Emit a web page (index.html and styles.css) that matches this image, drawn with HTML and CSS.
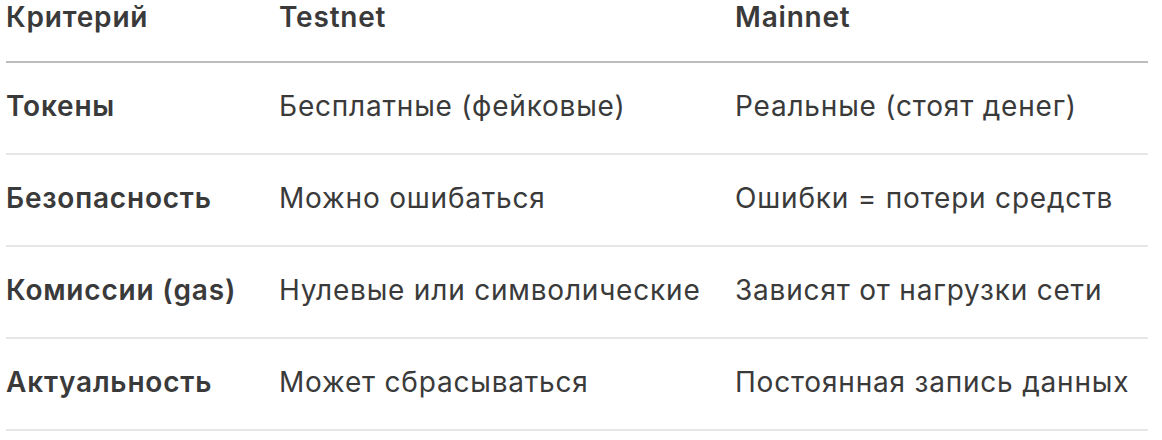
FILE: index.html
```html
<!DOCTYPE html>
<html lang="ru">
<head>
<meta charset="utf-8">
<link rel="stylesheet" href="styles.css">
</head>
<body>
<div class="wrap">
<table class="cmp">
  <colgroup>
    <col class="c1"><col class="c2"><col class="c3">
  </colgroup>
  <thead>
    <tr><th>Критерий</th><th>Testnet</th><th>Mainnet</th></tr>
  </thead>
  <tbody>
    <tr><td class="k">Токены</td><td>Бесплатные (фейковые)</td><td>Реальные (стоят денег)</td></tr>
    <tr><td class="k">Безопасность</td><td>Можно ошибаться</td><td>Ошибки = потери средств</td></tr>
    <tr><td class="k">Комиссии (gas)</td><td>Нулевые или символические</td><td>Зависят от нагрузки сети</td></tr>
    <tr><td class="k">Актуальность</td><td>Может сбрасываться</td><td>Постоянная запись данных</td></tr>
  </tbody>
</table>
</div>
</body>
</html>
```
FILE: styles.css
```css
html, body {
  margin: 0;
  padding: 0;
  background: #ffffff;
}
.wrap {
  padding: 0 14px 0 6px;
}
.cmp {
  width: 1142px;
  border-collapse: collapse;
  table-layout: fixed;
  font-family: Inter, "Noto Sans", sans-serif;
  font-size: 28px;
  letter-spacing: 0.8px;
  color: #3a3a3a;
}
.c1 { width: 273px; }
.c2 { width: 456px; }
.c3 { width: 413px; }
.cmp th {
  text-align: left;
  font-weight: 600;
  line-height: 34px;
  padding: 0 0 27px 0;
  border-bottom: 2px solid #bdbdbd;
  white-space: nowrap;
}
.cmp td {
  line-height: 34px;
  padding: 26px 0 30px 0;
  border-bottom: 2px solid #e6e6e6;
  font-weight: 400;
  white-space: nowrap;
}
.cmp td.k {
  font-weight: 600;
}
```
